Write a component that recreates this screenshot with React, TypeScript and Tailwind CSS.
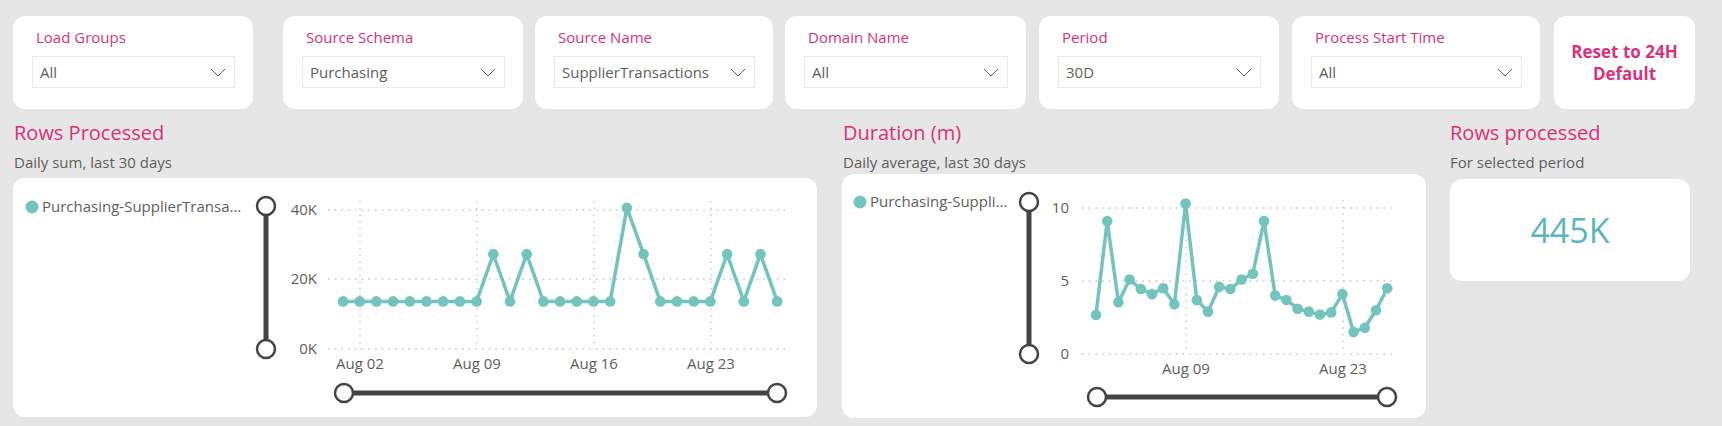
import React from "react"

//------------------------------------------------------------

const PINK = "#d9317a"
const TEAL = "#72c4bd"
const GREY = "#605e5c"

type Filter = { label: string; value: string; width: string; ml: string }

const filters: Filter[] = [
  { label: "Load Groups", value: "All", width: "w-[240px]", ml: "" },
  { label: "Source Schema", value: "Purchasing", width: "w-[240px]", ml: "ml-[30px]" },
  { label: "Source Name", value: "SupplierTransactions", width: "w-[238px]", ml: "ml-[12px]" },
  { label: "Domain Name", value: "All", width: "w-[241px]", ml: "ml-[12px]" },
  { label: "Period", value: "30D", width: "w-[240px]", ml: "ml-[13px]" },
  { label: "Process Start Time", value: "All", width: "w-[248px]", ml: "ml-[13px]" },
]

const Chevron = () => (
  <svg width="16" height="9" viewBox="0 0 16 9" fill="none">
    <polyline points="1,1 8,8 15,1" stroke={GREY} strokeWidth="1" />
  </svg>
)

const FilterCard = ({ f }: { f: Filter }) => (
  <div className={`${f.width} ${f.ml} h-[93px] shrink-0 rounded-xl bg-white pt-[11px] pl-[19px] pr-[18px]`}>
    <div className="pl-[4px] text-[15px] leading-[20px] text-[#d9317a]">{f.label}</div>
    <div className="mt-[9px] flex h-[32px] items-center justify-between border border-[#ebebeb] pl-[7px] pr-[8px]">
      <span className="text-[15px] text-[#605e5c]">{f.value}</span>
      <Chevron />
    </div>
  </div>
)

//------------------------------------------------------------

type ChartCfg = {
  w: number
  h: number
  dot: [number, number]
  legendX: number
  legendY: number
  legend: string
  vSlider: { x: number; y1: number; y2: number }
  yLabelX: number
  yTicks: { label: string; y: number }[]
  gridX1: number
  gridX2: number
  vGrid: { x: number; label: string }[]
  vGridTop: number
  xLabelY: number
  points: [number, number][]
  hSlider: { y: number; x1: number; x2: number }
}

const rowsVals = [
  13.7, 13.7, 13.7, 13.7, 13.7, 13.7, 13.7, 13.7, 13.7, 27.3, 13.7, 27.3, 13.7, 13.7,
  13.7, 13.7, 13.7, 40.6, 27.3, 13.7, 13.7, 13.7, 13.7, 27.3, 13.7, 27.3, 13.7,
]

const durVals = [
  2.67, 9.1, 3.55, 5.1, 4.45, 4.1, 4.5, 3.4, 10.3, 3.7, 2.9, 4.6, 4.45, 5.1, 5.5, 9.1,
  4.0, 3.7, 3.1, 2.9, 2.7, 2.85, 4.1, 1.5, 1.8, 3.0, 4.5,
]

const rowsChart: ChartCfg = {
  w: 804,
  h: 239,
  dot: [19, 29],
  legendX: 29,
  legendY: 34,
  legend: "Purchasing-SupplierTransa...",
  vSlider: { x: 253, y1: 28, y2: 171 },
  yLabelX: 304,
  yTicks: [
    { label: "40K", y: 32 },
    { label: "20K", y: 101 },
    { label: "0K", y: 171 },
  ],
  gridX1: 315,
  gridX2: 772,
  vGrid: [
    { x: 347, label: "Aug 02" },
    { x: 464, label: "Aug 09" },
    { x: 581, label: "Aug 16" },
    { x: 698, label: "Aug 23" },
  ],
  vGridTop: 23,
  xLabelY: 191,
  points: rowsVals.map((v, i) => [330 + 16.7 * i, 171 - 3.475 * v]),
  hSlider: { y: 215, x1: 331, x2: 764 },
}

const durChart: ChartCfg = {
  w: 584,
  h: 244,
  dot: [18, 28],
  legendX: 28,
  legendY: 33,
  legend: "Purchasing-Suppli...",
  vSlider: { x: 187, y1: 28, y2: 180 },
  yLabelX: 227,
  yTicks: [
    { label: "10", y: 34 },
    { label: "5", y: 107 },
    { label: "0", y: 180 },
  ],
  gridX1: 240,
  gridX2: 555,
  vGrid: [
    { x: 344, label: "Aug 09" },
    { x: 501, label: "Aug 23" },
  ],
  vGridTop: 26,
  xLabelY: 200,
  points: durVals.map((v, i) => [254 + 11.2 * i, 180 - 14.6 * v]),
  hSlider: { y: 223, x1: 255, x2: 545 },
}

const Knob = ({ x, y }: { x: number; y: number }) => (
  <circle cx={x} cy={y} r={9} fill="#fff" stroke="#444" strokeWidth={2.5} />
)

const LineChart = ({ c }: { c: ChartCfg }) => {
  const path = c.points.map((p, i) => `${i === 0 ? "M" : "L"}${p[0]},${p[1]}`).join(" ")
  return (
    <svg width={c.w} height={c.h} fontFamily="'Open Sans', sans-serif" fontSize="15">
      {/* legend */}
      <circle cx={c.dot[0]} cy={c.dot[1]} r={6.5} fill={TEAL} />
      <text x={c.legendX} y={c.legendY} fill={GREY}>
        {c.legend}
      </text>

      {/* grid */}
      {c.yTicks.map((t) => (
        <g key={t.label}>
          <line x1={c.gridX1} x2={c.gridX2} y1={t.y} y2={t.y} stroke="#c8c8c8" strokeWidth={1.3} strokeDasharray="1.6 5.1" />
          <text x={c.yLabelX} y={t.y + 5} textAnchor="end" fill={GREY}>
            {t.label}
          </text>
        </g>
      ))}
      {c.vGrid.map((g) => (
        <g key={g.label}>
          <line x1={g.x} x2={g.x} y1={c.vGridTop} y2={c.yTicks[2].y} stroke="#c8c8c8" strokeWidth={1.3} strokeDasharray="1.6 5.1" />
          <text x={g.x} y={c.xLabelY} textAnchor="middle" fill={GREY}>
            {g.label}
          </text>
        </g>
      ))}

      {/* series */}
      <path d={path} fill="none" stroke={TEAL} strokeWidth={3.5} strokeLinejoin="round" />
      {c.points.map((p, i) => (
        <circle key={i} cx={p[0]} cy={p[1]} r={5.3} fill={TEAL} />
      ))}

      {/* sliders */}
      <line x1={c.vSlider.x} x2={c.vSlider.x} y1={c.vSlider.y1} y2={c.vSlider.y2} stroke="#444" strokeWidth={5} />
      <Knob x={c.vSlider.x} y={c.vSlider.y1} />
      <Knob x={c.vSlider.x} y={c.vSlider.y2} />
      <line x1={c.hSlider.x1} x2={c.hSlider.x2} y1={c.hSlider.y} y2={c.hSlider.y} stroke="#444" strokeWidth={5} />
      <Knob x={c.hSlider.x1} y={c.hSlider.y} />
      <Knob x={c.hSlider.x2} y={c.hSlider.y} />
    </svg>
  )
}

const SectionHead = ({ title, sub }: { title: string; sub: string }) => (
  <>
    <div className="text-[20px] leading-[28px] text-[#d9317a]">{title}</div>
    <div className="mt-[5px] text-[15px] leading-[20px] text-[#605e5c]">{sub}</div>
  </>
)

//------------------------------------------------------------

const App = () => {
  return (
    <div
      className="h-[426px] w-[1722px] overflow-hidden bg-[#e6e6e6] font-['Open_Sans',sans-serif]"
      style={{ color: PINK }}
    >
      {/* FILTERS */}
      <div className="flex pl-[13px] pt-[16px]">
        {filters.map((f) => (
          <FilterCard key={f.label} f={f} />
        ))}
        <div className="ml-[14px] flex h-[93px] w-[141px] shrink-0 items-center justify-center rounded-xl bg-white text-center text-[17px] font-bold leading-[22px] text-[#d9317a]">
          Reset to 24H
          <br />
          Default
        </div>
      </div>

      {/* CHARTS */}
      <div className="mt-[10px] flex pl-[13px]">
        <div className="w-[804px] shrink-0">
          <div className="pl-[1px]">
            <SectionHead title="Rows Processed" sub="Daily sum, last 30 days" />
          </div>
          <div className="mt-[6px] overflow-hidden rounded-xl bg-white">
            <LineChart c={rowsChart} />
          </div>
        </div>

        <div className="ml-[25px] w-[584px] shrink-0">
          <div className="pl-[1px]">
            <SectionHead title="Duration (m)" sub="Daily average, last 30 days" />
          </div>
          <div className="mt-[2px] overflow-hidden rounded-xl bg-white">
            <LineChart c={durChart} />
          </div>
        </div>

        <div className="ml-[24px] w-[240px] shrink-0">
          <SectionHead title="Rows processed" sub="For selected period" />
          <div className="mt-[7px] flex h-[102px] items-center justify-center rounded-xl bg-white">
            <span className="text-[34px] text-[#5db5bd]">445K</span>
          </div>
        </div>
      </div>
    </div>
  )
}

export default App
